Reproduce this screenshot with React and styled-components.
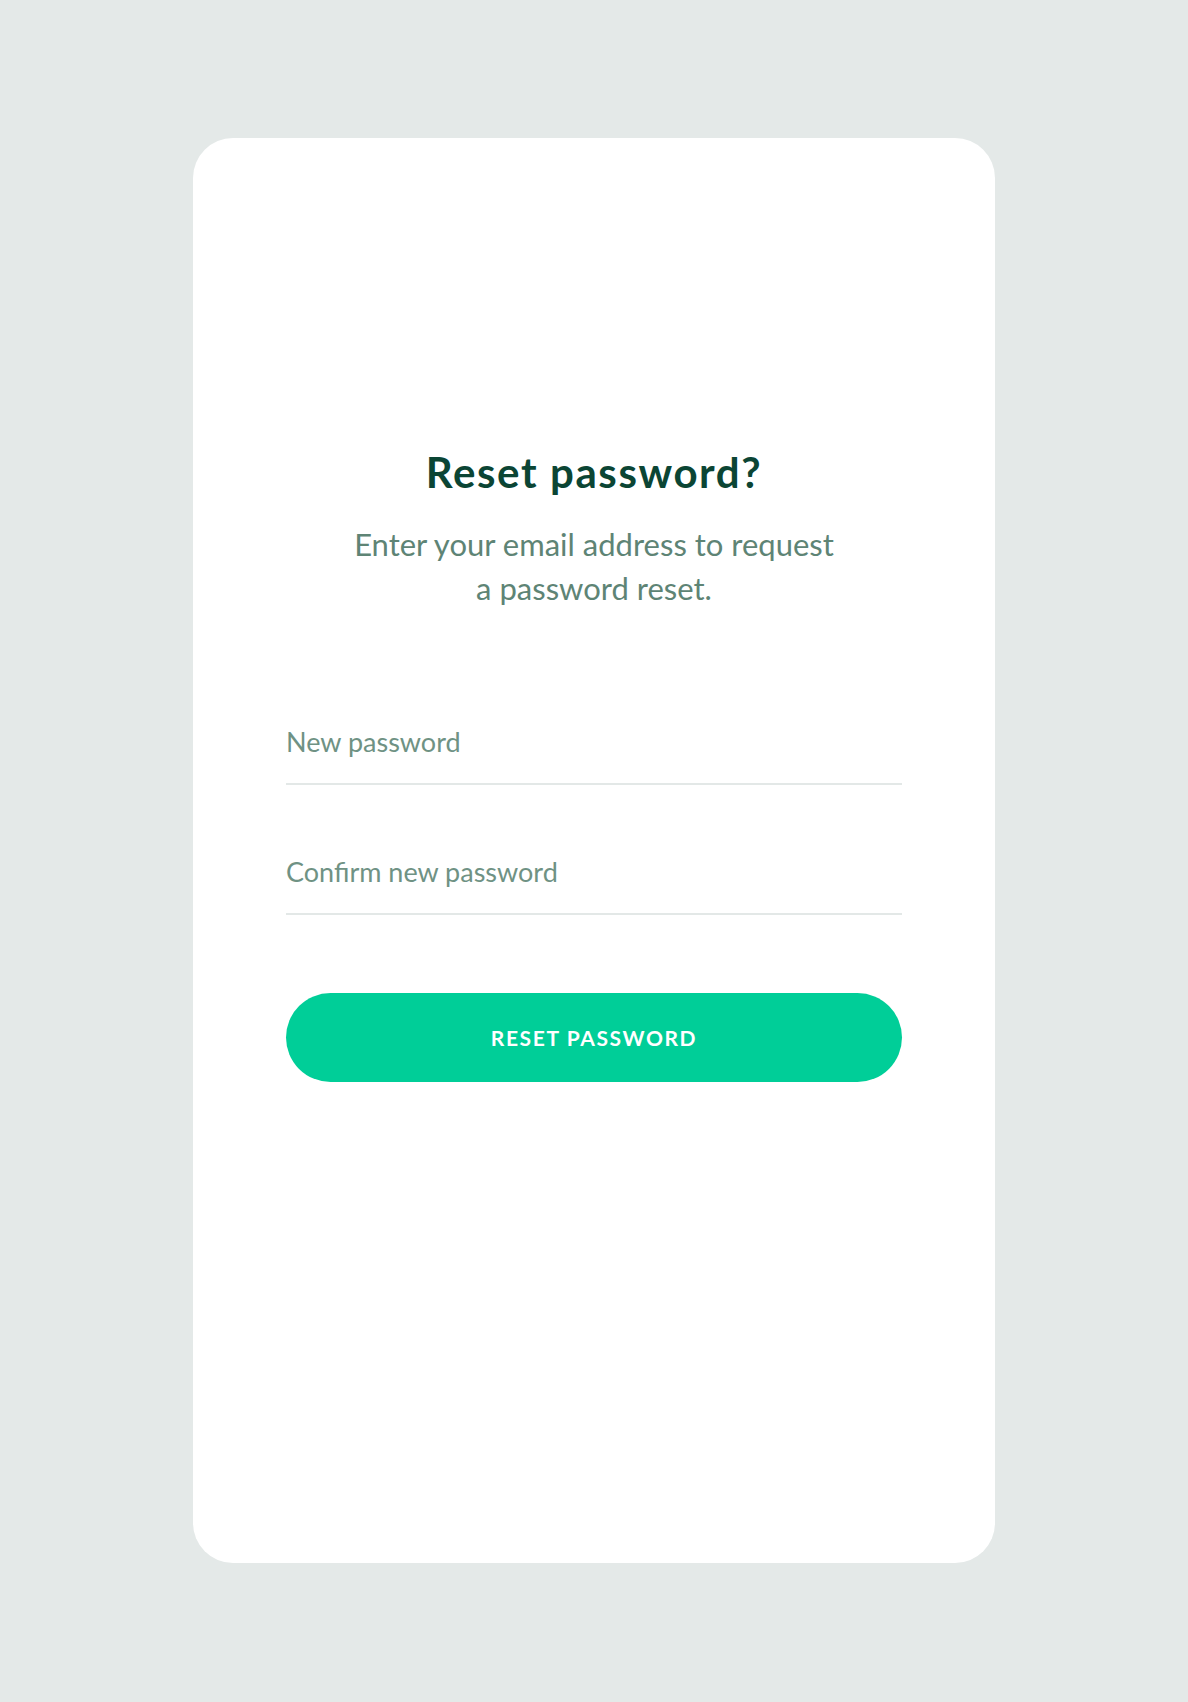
import React from 'react';
import styled, { createGlobalStyle } from 'styled-components';

const GlobalStyle = createGlobalStyle`
  html, body {
    margin: 0;
    padding: 0;
    background: #e4e9e8;
  }
  body {
    font-family: Lato, "Open Sans", Arial, sans-serif;
    -webkit-font-smoothing: antialiased;
  }
`;

const Page = styled.div`
  min-height: 1702px;
  padding-top: 138px;
  box-sizing: border-box;
`;

const Card = styled.div`
  width: 802px;
  height: 1425px;
  margin: 0 auto;
  background: #ffffff;
  border-radius: 40px;
  padding: 310px 93px 0;
  box-sizing: border-box;
  display: flex;
  flex-direction: column;
  align-items: stretch;
`;

const Title = styled.h1`
  margin: 0;
  font-size: 42px;
  line-height: 48px;
  font-weight: 700;
  letter-spacing: 1.6px;
  color: #0b4534;
  text-align: center;
`;

const Subtitle = styled.p`
  margin: 26px 0 0;
  font-size: 31px;
  line-height: 44px;
  font-weight: 400;
  color: #5e8475;
  text-align: center;
`;

const Form = styled.form`
  display: flex;
  flex-direction: column;
  margin-top: 103px;
`;

const Field = styled.input`
  display: block;
  width: 100%;
  height: 72px;
  margin-top: ${props => props.first ? '0' : '58px'};
  padding: 0 0 14px;
  border: none;
  border-bottom: 2px solid #e3e8e7;
  outline: none;
  background: transparent;
  font-family: Lato, "Open Sans", Arial, sans-serif;
  font-size: 27px;
  color: #2d5a4a;
  box-sizing: border-box;
  &::placeholder {
    color: #6f9284;
  }
`;

const Button = styled.button`
  margin-top: 78px;
  height: 89px;
  width: 100%;
  border: none;
  border-radius: 45px;
  background: #00ce98;
  color: #ffffff;
  font-family: Lato, "Open Sans", Arial, sans-serif;
  font-size: 21px;
  font-weight: 700;
  letter-spacing: 1.6px;
  text-transform: uppercase;
  cursor: pointer;
`;

export default function App() {
  return (
    <Page>
      <GlobalStyle />
      <Card>
        <Title>Reset password?</Title>
        <Subtitle>
          Enter your email address to request
          <br />
          a password reset.
        </Subtitle>
        <Form onSubmit={e => e.preventDefault()}>
          <Field first type="password" placeholder="New password" />
          <Field type="password" placeholder="Confirm new password" />
          <Button type="submit">Reset password</Button>
        </Form>
      </Card>
    </Page>
  );
}
